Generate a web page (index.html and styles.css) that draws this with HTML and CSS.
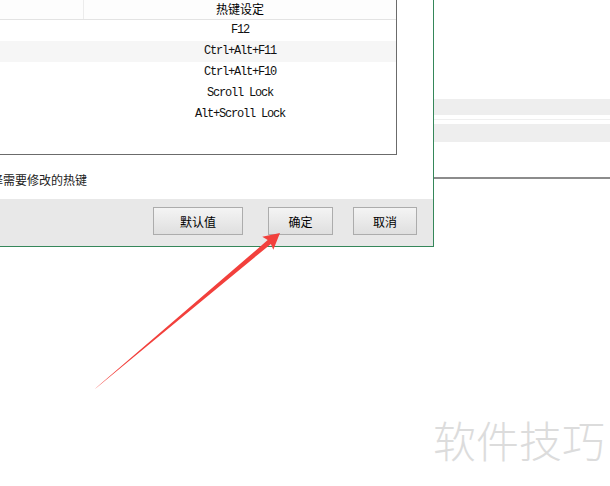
FILE: index.html
```html
<!DOCTYPE html>
<html lang="zh-CN">
<head>
    <meta charset="UTF-8">
    <meta name="viewport" content="width=device-width, initial-scale=1.0">
    <title>热键设定</title>
    <link rel="stylesheet" href="styles.css">
</head>
<body>

    <div class="screen">
        <!-- Hotkey dialog, partly off the left edge -->
        <div class="dialog">
            <div class="dialog-body">
                <div class="listview">
                    <div class="lv-header">
                        <div class="lv-name"></div>
                        <div class="lv-key">热键设定</div>
                    </div>
                    <div class="lv-row"><span class="lv-name"></span><span class="lv-key mono">F12</span></div>
                    <div class="lv-row lv-row-alt"><span class="lv-name"></span><span class="lv-key mono">Ctrl+Alt+F11</span></div>
                    <div class="lv-row"><span class="lv-name"></span><span class="lv-key mono">Ctrl+Alt+F10</span></div>
                    <div class="lv-row"><span class="lv-name"></span><span class="lv-key mono">Scroll Lock</span></div>
                    <div class="lv-row"><span class="lv-name"></span><span class="lv-key mono">Alt+Scroll Lock</span></div>
                </div>
                <p class="hint">选择需要修改的热键</p>
            </div>

            <div class="button-bar">
                <button class="btn btn-default">默认值</button>
                <button class="btn btn-ok">确定</button>
                <button class="btn btn-cancel">取消</button>
            </div>
        </div>

        <!-- Window behind the dialog -->
        <div class="side">
            <div class="side-bar side-bar-top"></div>
            <div class="side-line"></div>
            <div class="side-bar side-bar-bottom"></div>
            <div class="side-rule"></div>
        </div>
    </div>

    <!-- Red pointer arrow -->
    <svg class="arrow" width="610" height="486" viewBox="0 0 610 486">
        <polygon points="95,389 97,387 267.7,240.1 262.3,236.8 280,233 273.3,249.8 270.9,243.9" fill="#f2403c"/>
    </svg>

    <div class="watermark">软件技巧</div>

</body>
</html>
```

FILE: styles.css
```css
/* General styling */
body {
    margin: 0;
    width: 610px;
    height: 486px;
    overflow: hidden;
    position: relative;
    background-color: #fff;
    font-family: "Noto Sans CJK SC", "Liberation Sans", sans-serif;
    font-size: 12px;
    color: #000;
}
.screen {
    display: flex;
    align-items: flex-start;
}

/* Dialog */
.dialog {
    flex: none;
    width: 464px;
    margin-left: -30px;
    border-right: 1px solid #35875a;
    box-sizing: border-box;
}
.dialog-body {
    background-color: #fff;
}

/* List view */
.listview {
    width: 417px;
    height: 155px;
    margin-left: 10px;
    border: 1px solid #6b6b6b;
    border-top: none;
    box-sizing: border-box;
}
.lv-header,
.lv-row {
    display: grid;
    grid-template-columns: 103px 1fr;
}
.lv-header {
    height: 20px;
    line-height: 18px;
    border-bottom: 1px solid #e3e3e3;
    box-sizing: border-box;
    background-color: #fdfdfd;
}
.lv-header .lv-name {
    border-right: 1px solid #ececec;
}
.lv-row {
    height: 21px;
    line-height: 21px;
}
.lv-row-alt {
    background-color: #f6f6f6;
}
.lv-key {
    text-align: center;
}
.mono {
    font-family: "Liberation Mono", monospace;
    font-size: 12px;
    letter-spacing: -1.2px;
    color: #111;
}

.hint {
    margin: 17px 0 11px 9px;
    line-height: 16px;
    color: #222;
}

/* Button bar */
.button-bar {
    display: flex;
    justify-content: flex-end;
    align-items: flex-start;
    height: 48px;
    padding: 8px 16px 0 0;
    box-sizing: border-box;
    background-color: #e8e8e8;
    border-bottom: 1px solid #35875a;
}
.btn {
    height: 28px;
    padding: 0;
    border: 1px solid #acacac;
    background: linear-gradient(#f4f4f4, #dfdfdf);
    font-family: "Noto Sans CJK SC", sans-serif;
    font-size: 12px;
    color: #000;
}
.btn-default { width: 90px; }
.btn-ok { width: 65px; margin-left: 25px; }
.btn-cancel { width: 64px; margin-left: 20px; }

/* Window behind */
.side {
    flex: 1;
    padding-top: 99px;
}
.side-bar {
    background-color: #eeeeee;
}
.side-bar-top { height: 16px; }
.side-line {
    height: 1px;
    margin-top: 4px;
    background-color: #efefef;
}
.side-bar-bottom {
    height: 18px;
    margin-top: 4px;
}
.side-rule {
    height: 2px;
    margin-top: 35px;
    background-color: #8c8c8c;
}

/* Overlays */
.arrow {
    position: absolute;
    left: 0;
    top: 0;
    pointer-events: none;
}
.watermark {
    position: absolute;
    left: 433px;
    top: 418px;
    font-size: 43px;
    line-height: 43px;
    font-weight: 300;
    color: #dcdcdc;
    white-space: nowrap;
}
```
